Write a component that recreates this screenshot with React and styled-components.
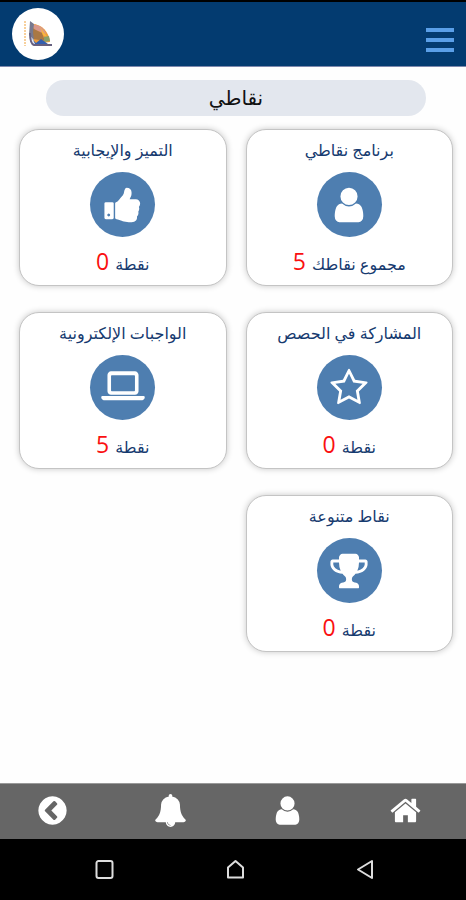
import React from "react";
import styled, { createGlobalStyle } from "styled-components";

const icons = {
  user: "M1536 1399q0 109-62.5 187t-150.5 78h-854q-88 0-150.5-78t-62.5-187q0-85 8.5-160.5t31.5-152 58.5-131 94-89 134.5-34.5q131 128 313 128t313-128q76 0 134.5 34.5t94 89 58.5 131 31.5 152 8.5 160.5zm-256-887q0 159-112.5 271.5t-271.5 112.5-271.5-112.5-112.5-271.5 112.5-271.5 271.5-112.5 271.5 112.5 112.5 271.5z",
  thumb: "M320 1344q0-26-19-45t-45-19q-27 0-45.5 19t-18.5 45q0 27 18.5 45.5t45.5 18.5q26 0 45-18.5t19-45.5zm160-512v640q0 26-19 45t-45 19h-288q-26 0-45-19t-19-45v-640q0-26 19-45t45-19h288q26 0 45 19t19 45zm1184 0q0 86-55 149 15 44 15 76 3 76-43 137 17 56 0 117-15 57-54 94 9 112-49 181-64 76-197 78h-129q-66 0-144-15.5t-121.5-29-120.5-39.5q-123-43-158-44-26-1-45-19.5t-19-44.5v-641q0-25 18-43.5t43-20.5q24-2 76-59t101-121q68-87 101-120 18-18 31-48t17.5-48.5 13.5-60.5q7-39 12.5-61t19.5-52 34-50q19-19 45-19 46 0 82.5 10.5t60 26 40 40.5 24 45 12 50 5 45 .5 39q0 38-9.5 76t-19 60-27.5 56q-3 6-10 18t-11 22-8 24h277q78 0 135 57t57 135z",
  star: "M1201 1004l306-297-422-62-189-382-189 382-422 62 306 297-73 421 378-199 377 199zm527-357q0 22-26 48l-363 354 86 500q1 7 1 20 0 50-41 50-19 0-40-12l-449-236-449 236q-22 12-40 12-21 0-31.5-14.5t-10.5-35.5q0-6 2-20l86-500-364-354q-25-27-25-48 0-37 56-46l502-73 225-455q19-41 49-41t49 41l225 455 502 73q56 9 56 46z",
  laptop: "M360 1200q-66 0-113-47t-47-113v-730q0-66 47-113t113-47h1072q66 0 113 47t47 113v730q0 66-47 113t-113 47zm32-870q-32 0-32 32v646q0 32 32 32h1008q32 0 32-32v-646q0-32-32-32zM-20 1250h1832q60 0 60 60 0 60-50 100-50 40-120 40h-1612q-70 0-120-40-50-40-50-100 0-60 60-60z",
  trophy: "M522 883q-74-162-74-371h-256v96q0 78 94.5 162t235.5 113zm1078-275v-96h-256q0 209-74 371 141-29 235.5-113t94.5-162zm128-128v128q0 71-41.5 143t-112 130-173 97.5-215.5 44.5q-42 54-95 95-38 34-52.5 72.5t-14.5 89.5q0 54 30.5 91t97.5 37q75 0 133.5 45.5t58.5 114.5v64q0 14-9 23t-23 9h-832q-14 0-23-9t-9-23v-64q0-69 58.5-114.5t133.5-45.5q67 0 97.5-37t30.5-91q0-51-14.5-89.5t-52.5-72.5q-53-41-95-95-113-5-215.5-44.5t-173-97.5-112-130-41.5-143v-128q0-40 28-68t68-28h288v-96q0-66 47-113t113-47h576q66 0 113 47t47 113v96h288q40 0 68 28t28 68z",
  home: "M1472 992v480q0 26-19 45t-45 19h-384v-384h-256v384h-384q-26 0-45-19t-19-45v-480q0-1 .5-3t.5-3l575-474 575 474q1 2 1 6zm223-69l-62 74q-8 9-21 11h-3q-13 0-21-7l-692-577-692 577q-12 8-24 7-13-2-21-11l-62-74q-8-10-7-23.5t11-21.5l719-599q32-26 76-26t76 26l244 204v-195q0-14 9-23t23-9h192q14 0 23 9t9 23v408l219 182q10 8 11 21.5t-7 23.5z",
  bell: "M912 1696q0-16-16-16-59 0-101.5-42.5t-42.5-101.5q0-16-16-16t-16 16q0 73 51.5 124.5t124.5 51.5q16 0 16-16zm816-288q0 52-38 90t-90 38h-448q0 106-75 181t-181 75-181-75-75-181h-448q-52 0-90-38t-38-90q50-42 91-88t85-119.5 74.5-158.5 50-206 19.5-260q0-152 117-282.5t307-158.5q-8-19-8-39 0-40 28-68t68-28 68 28 28 68q0 20-8 39 190 28 307 158.5t117 282.5q0 139 19.5 260t50 206 74.5 158.5 85 119.5 91 88z",
  back: "M1037 1395l102-102q19-19 19-45t-19-45l-307-307 307-307q19-19 19-45t-19-45l-102-102q-19-19-45-19t-45 19l-454 454q-19 19-19 45t19 45l454 454q19 19 45 19t45-19zm627-499q0 209-103 385.5t-279.5 279.5-385.5 103-385.5-103-279.5-279.5-103-385.5 103-385.5 279.5-279.5 385.5-103 385.5 103 279.5 279.5 103 385.5z",
};

const cards = [
  { title: "برنامج نقاطي", icon: "user", label: "مجموع نقاطك", points: 5 },
  { title: "التميز والإيجابية", icon: "thumb", label: "نقطة", points: 0 },
  { title: "المشاركة في الحصص", icon: "star", label: "نقطة", points: 0 },
  { title: "الواجبات الإلكترونية", icon: "laptop", label: "نقطة", points: 5 },
  { title: "نقاط متنوعة", icon: "trophy", label: "نقطة", points: 0 },
];

const tabs = [
  { name: "الرئيسية", icon: "home" },
  { name: "حسابي", icon: "user" },
  { name: "الإشعارات", icon: "bell" },
  { name: "رجوع", icon: "back" },
];

const systemKeys = [
  { name: "back", d: "M17 2v17L3 10.500z" },
  { name: "home", d: "M3 18.500V8.500L10.500 2 18 8.500v10z" },
  { name: "recent", d: "M4.500 2h12a2 2 0 0 1 2 2v13a2 2 0 0 1-2 2h-12a2 2 0 0 1-2-2V4a2 2 0 0 1 2-2z" },
];

const Icon = ({ name, size }) => (
  <Glyph viewBox="0 0 1792 1792" width={size} height={size} aria-hidden="true">
    <path d={icons[name]} />
  </Glyph>
);

const Logo = () => (
  <svg viewBox="0 0 52 52" width="52" height="52" aria-hidden="true">
    <path d="M13 13v25" stroke="#f7d09c" strokeWidth="2" strokeDasharray="2 1" />
    <path d="M20 16c10 0 17 8 18 18l-16 2z" fill="#ee9d3a" />
    <path d="M20 17c7-1 12 3 14 9l-11-4z" fill="#d9988c" />
    <path d="M18 18l4 3 8 4 3 8-12-2z" fill="#a97844" />
    <path d="M18 13l4 3-1 8 1 8-5-5z" fill="#77798f" />
    <path d="M28 19l8 11-5-3z" fill="#f8b640" />
    <path d="M32 29l5-1 1 5-6 1z" fill="#8aa06a" />
    <path d="M19 30l5 5 5-4 7 5-14 1z" fill="#345fae" />
    <path d="M18 29l3 3 2 4-2 1z" fill="#e8edf8" />
    <path d="M18 25c0 6 1 11 4 12h18" fill="none" stroke="#66607f" strokeWidth="2" />
  </svg>
);

const App = () => {
  return (
    <Page dir="rtl" lang="ar">
      <GlobalStyle />
      <Header>
        <MenuButton type="button" aria-label="القائمة">
          <span />
          <span />
          <span />
        </MenuButton>
        <LogoLink href="#home" aria-label="الصفحة الرئيسية">
          <Logo />
        </LogoLink>
      </Header>

      <Main>
        <PageTitle>نقاطي</PageTitle>
        <CardGrid>
          {cards.map((card) => (
            <Card key={card.title}>
              <CardTitle>{card.title}</CardTitle>
              <IconCircle>
                <Icon name={card.icon} size={40} />
              </IconCircle>
              <Score>
                {card.label} <Points>{card.points}</Points>
              </Score>
            </Card>
          ))}
        </CardGrid>
      </Main>

      <TabBar>
        {tabs.map((tab) => (
          <TabLink key={tab.icon} href={`#${tab.icon}`} aria-label={tab.name}>
            <Icon name={tab.icon} size={33} />
          </TabLink>
        ))}
      </TabBar>

      <SystemBar>
        {systemKeys.map((key) => (
          <SystemKey key={key.name} type="button" aria-label={key.name}>
            <svg viewBox="0 0 21 21" width="21" height="21">
              <path d={key.d} />
            </svg>
          </SystemKey>
        ))}
      </SystemBar>
    </Page>
  );
};

const GlobalStyle = createGlobalStyle`
  * {
    box-sizing: border-box;
    margin: 0;
    padding: 0;
  }

  body {
    background: #fefefe;
    font-family: "Open Sans", "DejaVu Sans", sans-serif;
  }
`;

const Page = styled.div`
  display: flex;
  flex-direction: column;
  min-height: 100vh;
`;

const Header = styled.header`
  display: flex;
  justify-content: space-between;
  align-items: flex-start;
  padding: 6px 12px;
  height: 67px;
  background: #033b70;
  border-top: 2px solid #000;
  border-bottom: 1px solid #7d88ad;
`;

const MenuButton = styled.button`
  display: flex;
  flex-direction: column;
  gap: 6px;
  margin-top: 20px;
  border: 0;
  background: none;
  cursor: pointer;

  span {
    width: 28px;
    height: 4px;
    background: #5a9fe8;
  }
`;

const LogoLink = styled.a`
  display: flex;
  border-radius: 50%;
  background: #fff;
  overflow: hidden;
`;

const Main = styled.main`
  flex: 1;
  padding: 13px 13px 24px 19px;
`;

const PageTitle = styled.h1`
  margin: 0 27px 13px;
  border-radius: 18px;
  background: #e3e7ee;
  color: #111;
  font-size: 20px;
  font-weight: 400;
  line-height: 36px;
  text-align: center;
`;

const CardGrid = styled.section`
  display: grid;
  grid-template-columns: repeat(2, 1fr);
  gap: 26px 19px;
`;

const Card = styled.article`
  display: flex;
  flex-direction: column;
  align-items: center;
  padding: 8px 0 5px;
  border: 1px solid #c4c4c4;
  border-radius: 20px;
  background: #fff;
  box-shadow: 0 0 6px rgba(0, 0, 0, 0.22);
  color: #163a6f;
`;

const CardTitle = styled.h2`
  font-size: 16px;
  font-weight: 400;
  line-height: 24px;
`;

const IconCircle = styled.div`
  display: flex;
  justify-content: center;
  align-items: center;
  width: 65px;
  height: 65px;
  margin: 10px 0 8px;
  border-radius: 50%;
  background: #4e7eb0;
`;

const Glyph = styled.svg`
  display: block;
  overflow: visible;
  fill: #fff;
`;

const Score = styled.p`
  font-size: 16px;
  line-height: 32px;
`;

const Points = styled.span`
  margin-right: 2px;
  color: #fa1010;
  font-size: 23px;
`;

const TabBar = styled.nav`
  display: flex;
  justify-content: space-between;
  padding: 10px 44px 12px 36px;
  background: #666;
  border-top: 1px solid #999;
`;

const TabLink = styled.a`
  display: flex;
`;

const SystemBar = styled.footer`
  display: flex;
  justify-content: space-between;
  padding: 20px 90px 20px 94px;
  background: #000;
`;

const SystemKey = styled.button`
  display: flex;
  border: 0;
  background: none;
  cursor: pointer;

  path {
    fill: none;
    stroke: #ddd;
    stroke-width: 2;
    stroke-linejoin: round;
  }
`;

export default App;
